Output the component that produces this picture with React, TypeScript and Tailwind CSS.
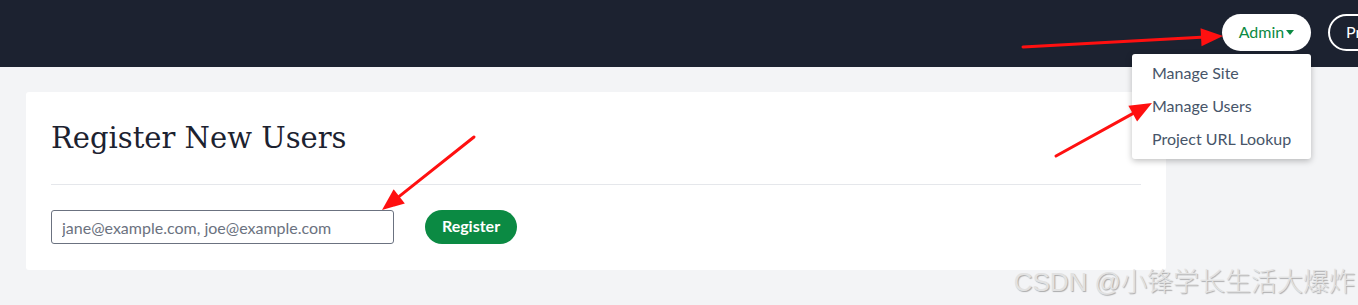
function Arrow({ x1, y1, x2, y2 }: { x1: number; y1: number; x2: number; y2: number }) {
  const a = Math.atan2(y2 - y1, x2 - x1);
  const len = 22;
  const w = 9;
  const bx = x2 - Math.cos(a) * len;
  const by = y2 - Math.sin(a) * len;
  const px = -Math.sin(a) * w;
  const py = Math.cos(a) * w;
  return (
    <g>
      <line x1={x1} y1={y1} x2={bx} y2={by} stroke="#ff1010" strokeWidth={3} strokeLinecap="round" />
      <polygon points={`${x2},${y2} ${bx + px},${by + py} ${bx - px},${by - py}`} fill="#ff1010" />
    </g>
  );
}

export default function App() {
  return (
    <div className="relative h-[305px] w-[1358px] overflow-hidden bg-[#f3f4f6] font-['Lato',sans-serif]">
      {/* barra superior */}
      <header className="flex h-[67px] items-start justify-end gap-[17px] bg-[#1c2230] pt-[14px]">
        <button className="flex h-[37px] w-[89px] items-center justify-center gap-[2px] rounded-full bg-white pb-[1px] text-[16px] text-[#0b8a43]">
          Admin
          <svg width="8" height="5" viewBox="0 0 8 5" className="mt-[1px]">
            <path d="M0 0h8L4 5z" fill="#0b8a43" />
          </svg>
        </button>
        <button className="-mr-[60px] flex h-[37px] w-[90px] items-center overflow-hidden rounded-full border-2 border-white pb-[1px] pl-[16px] text-[16px] text-white">
          Pr
        </button>
      </header>

      <main className="px-[26px] pt-[25px]">
        <section className="w-[1140px] rounded-[3px] bg-white px-[25px] pb-[26px] pt-[26px]">
          <h1 className="font-['DejaVu_Serif',serif] text-[29px] leading-[40px] text-[#1c2230]">Register New Users</h1>
          <hr className="mt-[26px] border-[#e5e7eb]" />
          <div className="mt-[25px] flex items-center gap-[31px]">
            <input
              className="h-[34px] w-[343px] rounded-[3px] border border-[#6b7280] px-[10px] text-[16px] text-[#1c2230] outline-none placeholder:text-[#6b7280]"
              placeholder="jane@example.com, joe@example.com"
            />
            <button className="h-[34px] w-[92px] rounded-full bg-[#0b8a43] pb-[2px] text-[16px] font-bold text-white">Register</button>
          </div>
        </section>
      </main>

      {/* menu suspenso do Admin */}
      <div className="absolute left-[1132px] top-[54px] flex w-[179px] flex-col rounded-[3px] bg-white pb-[4px] pt-[2px] shadow-[0_2px_6px_rgba(0,0,0,0.25)]">
        {["Manage Site", "Manage Users", "Project URL Lookup"].map((t) => (
          <a key={t} className="whitespace-nowrap px-[20px] py-[6px] text-[16px] leading-[21px] text-[#475569]">
            {t}
          </a>
        ))}
      </div>

      {/* anotações */}
      <svg className="pointer-events-none absolute inset-0" width="1358" height="305">
        <Arrow x1={1023} y1={47} x2={1223} y2={36} />
        <Arrow x1={1056} y1={156} x2={1152} y2={103} />
        <Arrow x1={474} y1={137} x2={382} y2={210} />
      </svg>

      <div className="absolute bottom-[8px] right-[3px] font-['Liberation_Sans','Noto_Sans_CJK_SC',sans-serif] text-[26px] font-light leading-[30px] text-[#e2e2e2] [text-shadow:1px_1px_1px_rgba(0,0,0,0.3)]">
        CSDN @小锋学长生活大爆炸
      </div>
    </div>
  );
}
